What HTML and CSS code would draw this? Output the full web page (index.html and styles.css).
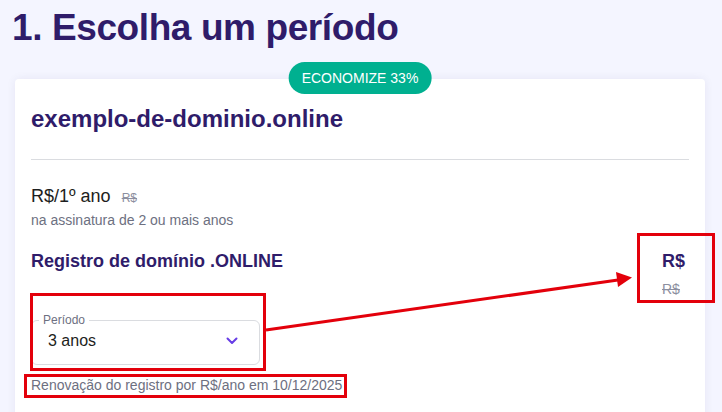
FILE: index.html
```html
<!DOCTYPE html>
<html lang="pt-BR">
<head>
    <meta charset="UTF-8">
    <meta name="viewport" content="width=device-width, initial-scale=1.0">
    <title>Escolha um período</title>
    <link rel="stylesheet" href="styles.css">
</head>
<body>
    <div class="page">
        <h1 class="title">1. Escolha um período</h1>

        <div class="card">
            <span class="badge">ECONOMIZE 33%</span>
            <h2 class="domain">exemplo-de-dominio.online</h2>
            <hr class="divider">

            <p class="price-line">R$/1º ano <s class="old-small">R$</s></p>
            <p class="note">na assinatura de 2 ou mais anos</p>

            <div class="product-row">
                <h3 class="product">Registro de domínio .ONLINE</h3>
                <div class="product-price">
                    <span class="now">R$</span>
                    <s class="was">R$</s>
                </div>
            </div>

            <fieldset class="period">
                <legend>Período</legend>
                <span class="period-value">3 anos</span>
                <svg class="chevron" width="12" height="8" viewBox="0 0 12 8">
                    <path d="M1.5 1.5 L6 6 L10.5 1.5" fill="none" stroke="#673de6" stroke-width="2" stroke-linecap="round" stroke-linejoin="round"/>
                </svg>
            </fieldset>

            <p class="renewal">Renovação do registro por R$/ano em 10/12/2025</p>
        </div>

        <!-- red markup drawn over the screenshot -->
        <svg class="marks" width="722" height="412" viewBox="0 0 722 412">
            <g fill="none" stroke="#e3000b" stroke-width="3">
                <rect x="638.5" y="234.5" width="75" height="67"/>
                <rect x="31.5" y="294.5" width="233" height="75"/>
                <rect x="25.5" y="375.5" width="320" height="21"/>
                <line x1="266" y1="330" x2="618" y2="280"/>
            </g>
            <polygon points="632,277.5 616,272 618,287" fill="#e3000b"/>
        </svg>
    </div>
</body>
</html>
```

FILE: styles.css
```css
body {
    margin: 0;
    background-color: #f4f5ff;
    font-family: "Liberation Sans", Arial, sans-serif;
    color: #1d1e20;
    overflow: hidden;
}
.page {
    position: relative;
    height: 412px;
    padding-left: 12px;
}
.title {
    margin: 0;
    padding-top: 5px;
    font-size: 37px;
    line-height: 45px;
    font-weight: 700;
    color: #2f1c6a;
    letter-spacing: -0.4px;
}
.card {
    position: relative;
    margin: 29px 17px 0 3px;
    padding: 24px 16px 40px;
    background-color: #fff;
    border-radius: 4px;
    box-shadow: 0 0 10px rgba(47, 28, 106, 0.07);
}
.badge {
    position: absolute;
    top: -17px;
    left: 50%;
    transform: translateX(-50%);
    height: 32px;
    padding: 0 13px;
    border-radius: 16px;
    background-color: #00b090;
    color: #fff;
    font-size: 14px;
    line-height: 32px;
    white-space: nowrap;
}
.domain {
    margin: 0;
    font-size: 24px;
    line-height: 32px;
    font-weight: 700;
    color: #2f1c6a;
}
.divider {
    margin: 24px 0 0;
    border: 0;
    border-top: 1px solid #dadce0;
}
.price-line {
    margin: 24px 0 0;
    font-size: 18px;
    line-height: 24px;
}
.old-small {
    margin-left: 6px;
    font-size: 12px;
    color: #8c8fa0;
}
.note {
    margin: 0;
    font-size: 14px;
    line-height: 20px;
    color: #6d7081;
}
.product-row {
    display: flex;
    justify-content: space-between;
    align-items: flex-start;
    margin-top: 19px;
}
.product {
    margin: 0;
    font-size: 18px;
    line-height: 24px;
    font-weight: 700;
    color: #2f1c6a;
}
.product-price {
    display: flex;
    flex-direction: column;
    margin-right: 4px;
}
.now {
    font-size: 18px;
    line-height: 24px;
    font-weight: 700;
    color: #2f1c6a;
}
.was {
    margin-top: 6px;
    font-size: 14px;
    line-height: 20px;
    color: #8c8fa0;
}
.period {
    display: flex;
    justify-content: space-between;
    align-items: center;
    box-sizing: border-box;
    width: 229px;
    margin: 14px 0 0;
    padding: 2px 21px 11px 16px;
    border: 1px solid #dadce0;
    border-radius: 6px;
}
.period legend {
    margin-left: -9px;
    padding: 0 4px;
    font-size: 12px;
    line-height: 14px;
    color: #6d7081;
}
.period-value {
    font-size: 16px;
    line-height: 24px;
}
.chevron {
    display: block;
}
.renewal {
    margin: 10px 0 0;
    font-size: 14px;
    line-height: 20px;
    color: #6d7081;
}
.marks {
    position: absolute;
    top: 0;
    left: 0;
    pointer-events: none;
}
```
